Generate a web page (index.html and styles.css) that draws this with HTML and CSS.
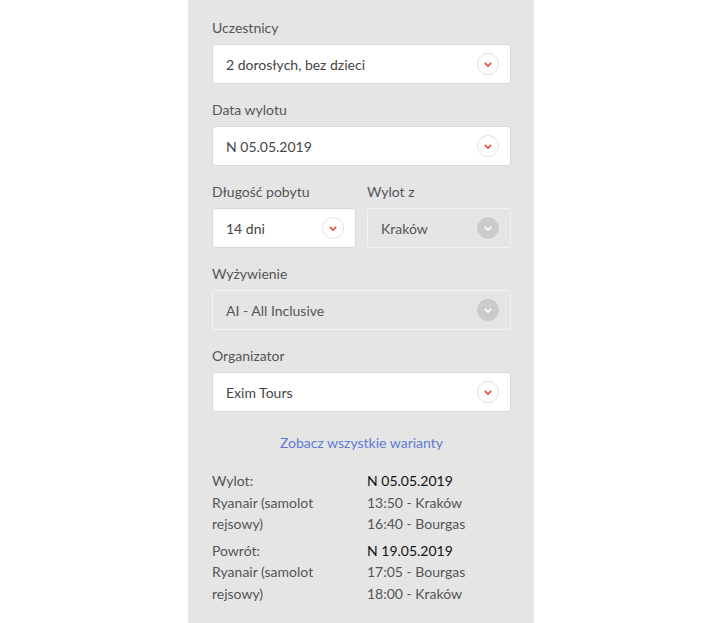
FILE: index.html
```html
<!DOCTYPE html>
<html lang="pl">
<head>
  <meta charset="UTF-8" />
  <meta name="viewport" content="width=device-width, initial-scale=1.0"/>
  <title>Rezerwacja</title>
  <link rel="stylesheet" href="styles.css">
</head>
<body>

  <div class="panel">

    <div class="field">
      <label>Uczestnicy</label>
      <div class="select">
        <span>2 dorosłych, bez dzieci</span>
        <span class="arrow"><svg viewBox="0 0 10 6"><path d="M1 1 L5 5 L9 1"/></svg></span>
      </div>
    </div>

    <div class="field">
      <label>Data wylotu</label>
      <div class="select">
        <span>N 05.05.2019</span>
        <span class="arrow"><svg viewBox="0 0 10 6"><path d="M1 1 L5 5 L9 1"/></svg></span>
      </div>
    </div>

    <div class="row">
      <div class="field">
        <label>Długość pobytu</label>
        <div class="select">
          <span>14 dni</span>
          <span class="arrow"><svg viewBox="0 0 10 6"><path d="M1 1 L5 5 L9 1"/></svg></span>
        </div>
      </div>
      <div class="field">
        <label>Wylot z</label>
        <div class="select disabled">
          <span>Kraków</span>
          <span class="arrow"><svg viewBox="0 0 10 6"><path d="M1 1 L5 5 L9 1"/></svg></span>
        </div>
      </div>
    </div>

    <div class="field">
      <label>Wyżywienie</label>
      <div class="select disabled">
        <span>AI - All Inclusive</span>
        <span class="arrow"><svg viewBox="0 0 10 6"><path d="M1 1 L5 5 L9 1"/></svg></span>
      </div>
    </div>

    <div class="field">
      <label>Organizator</label>
      <div class="select">
        <span>Exim Tours</span>
        <span class="arrow"><svg viewBox="0 0 10 6"><path d="M1 1 L5 5 L9 1"/></svg></span>
      </div>
    </div>

    <a class="more" href="#">Zobacz wszystkie warianty</a>

    <div class="flight">
      <div class="col">
        <span>Wylot:</span>
        <span>Ryanair (samolot rejsowy)</span>
      </div>
      <div class="col">
        <strong>N 05.05.2019</strong>
        <span>13:50 - Kraków</span>
        <span>16:40 - Bourgas</span>
      </div>
    </div>

    <div class="flight">
      <div class="col">
        <span>Powrót:</span>
        <span>Ryanair (samolot rejsowy)</span>
      </div>
      <div class="col">
        <strong>N 19.05.2019</strong>
        <span>17:05 - Bourgas</span>
        <span>18:00 - Kraków</span>
      </div>
    </div>

  </div>

</body>
</html>
```

FILE: styles.css
```css
body {
  margin: 0;
  background-color: #fff;
  font-family: "Source Sans Pro", Lato, "Liberation Sans", sans-serif;
  font-size: 14px;
  color: #555;
}

.panel {
  width: 346px;
  min-height: 623px;
  margin: 0 auto 0 188px;
  box-sizing: border-box;
  padding: 18px 23px 0 24px;
  background-color: #e5e5e5;
}

.field {
  margin-bottom: 16px;
}

.field label {
  display: block;
  line-height: 20px;
  margin-bottom: 6px;
  color: #555;
}

.select {
  display: flex;
  align-items: center;
  justify-content: space-between;
  height: 40px;
  box-sizing: border-box;
  padding: 0 11px 0 13px;
  background-color: #fff;
  border: 1px solid #d9d9d9;
  border-radius: 3px;
  color: #444;
}

.select.disabled {
  background-color: #e5e5e5;
  border-color: #f4f4f4;
  color: #555;
}

.arrow {
  display: flex;
  align-items: center;
  justify-content: center;
  width: 22px;
  height: 22px;
  box-sizing: border-box;
  border: 1px solid #e3e3e3;
  border-radius: 50%;
  background-color: #fff;
}

.arrow svg {
  width: 8px;
  height: 5px;
  fill: none;
  stroke: #ee4a36;
  stroke-width: 2;
}

.select.disabled .arrow {
  background-color: #cbcbcb;
  border-color: #cbcbcb;
}

.select.disabled .arrow svg {
  stroke: #fff;
}

.row {
  display: flex;
  gap: 11px;
}

.row .field {
  flex: 1;
}

.more {
  display: block;
  text-align: center;
  color: #5f7ad6;
  text-decoration: none;
  line-height: 20px;
  margin: 21px 0 17px;
}

.flight {
  display: flex;
  gap: 11px;
  margin-bottom: 5px;
  line-height: 21.5px;
}

.flight .col {
  flex: 1;
  display: flex;
  flex-direction: column;
}

.flight strong {
  font-weight: normal;
  color: #111;
}
```
